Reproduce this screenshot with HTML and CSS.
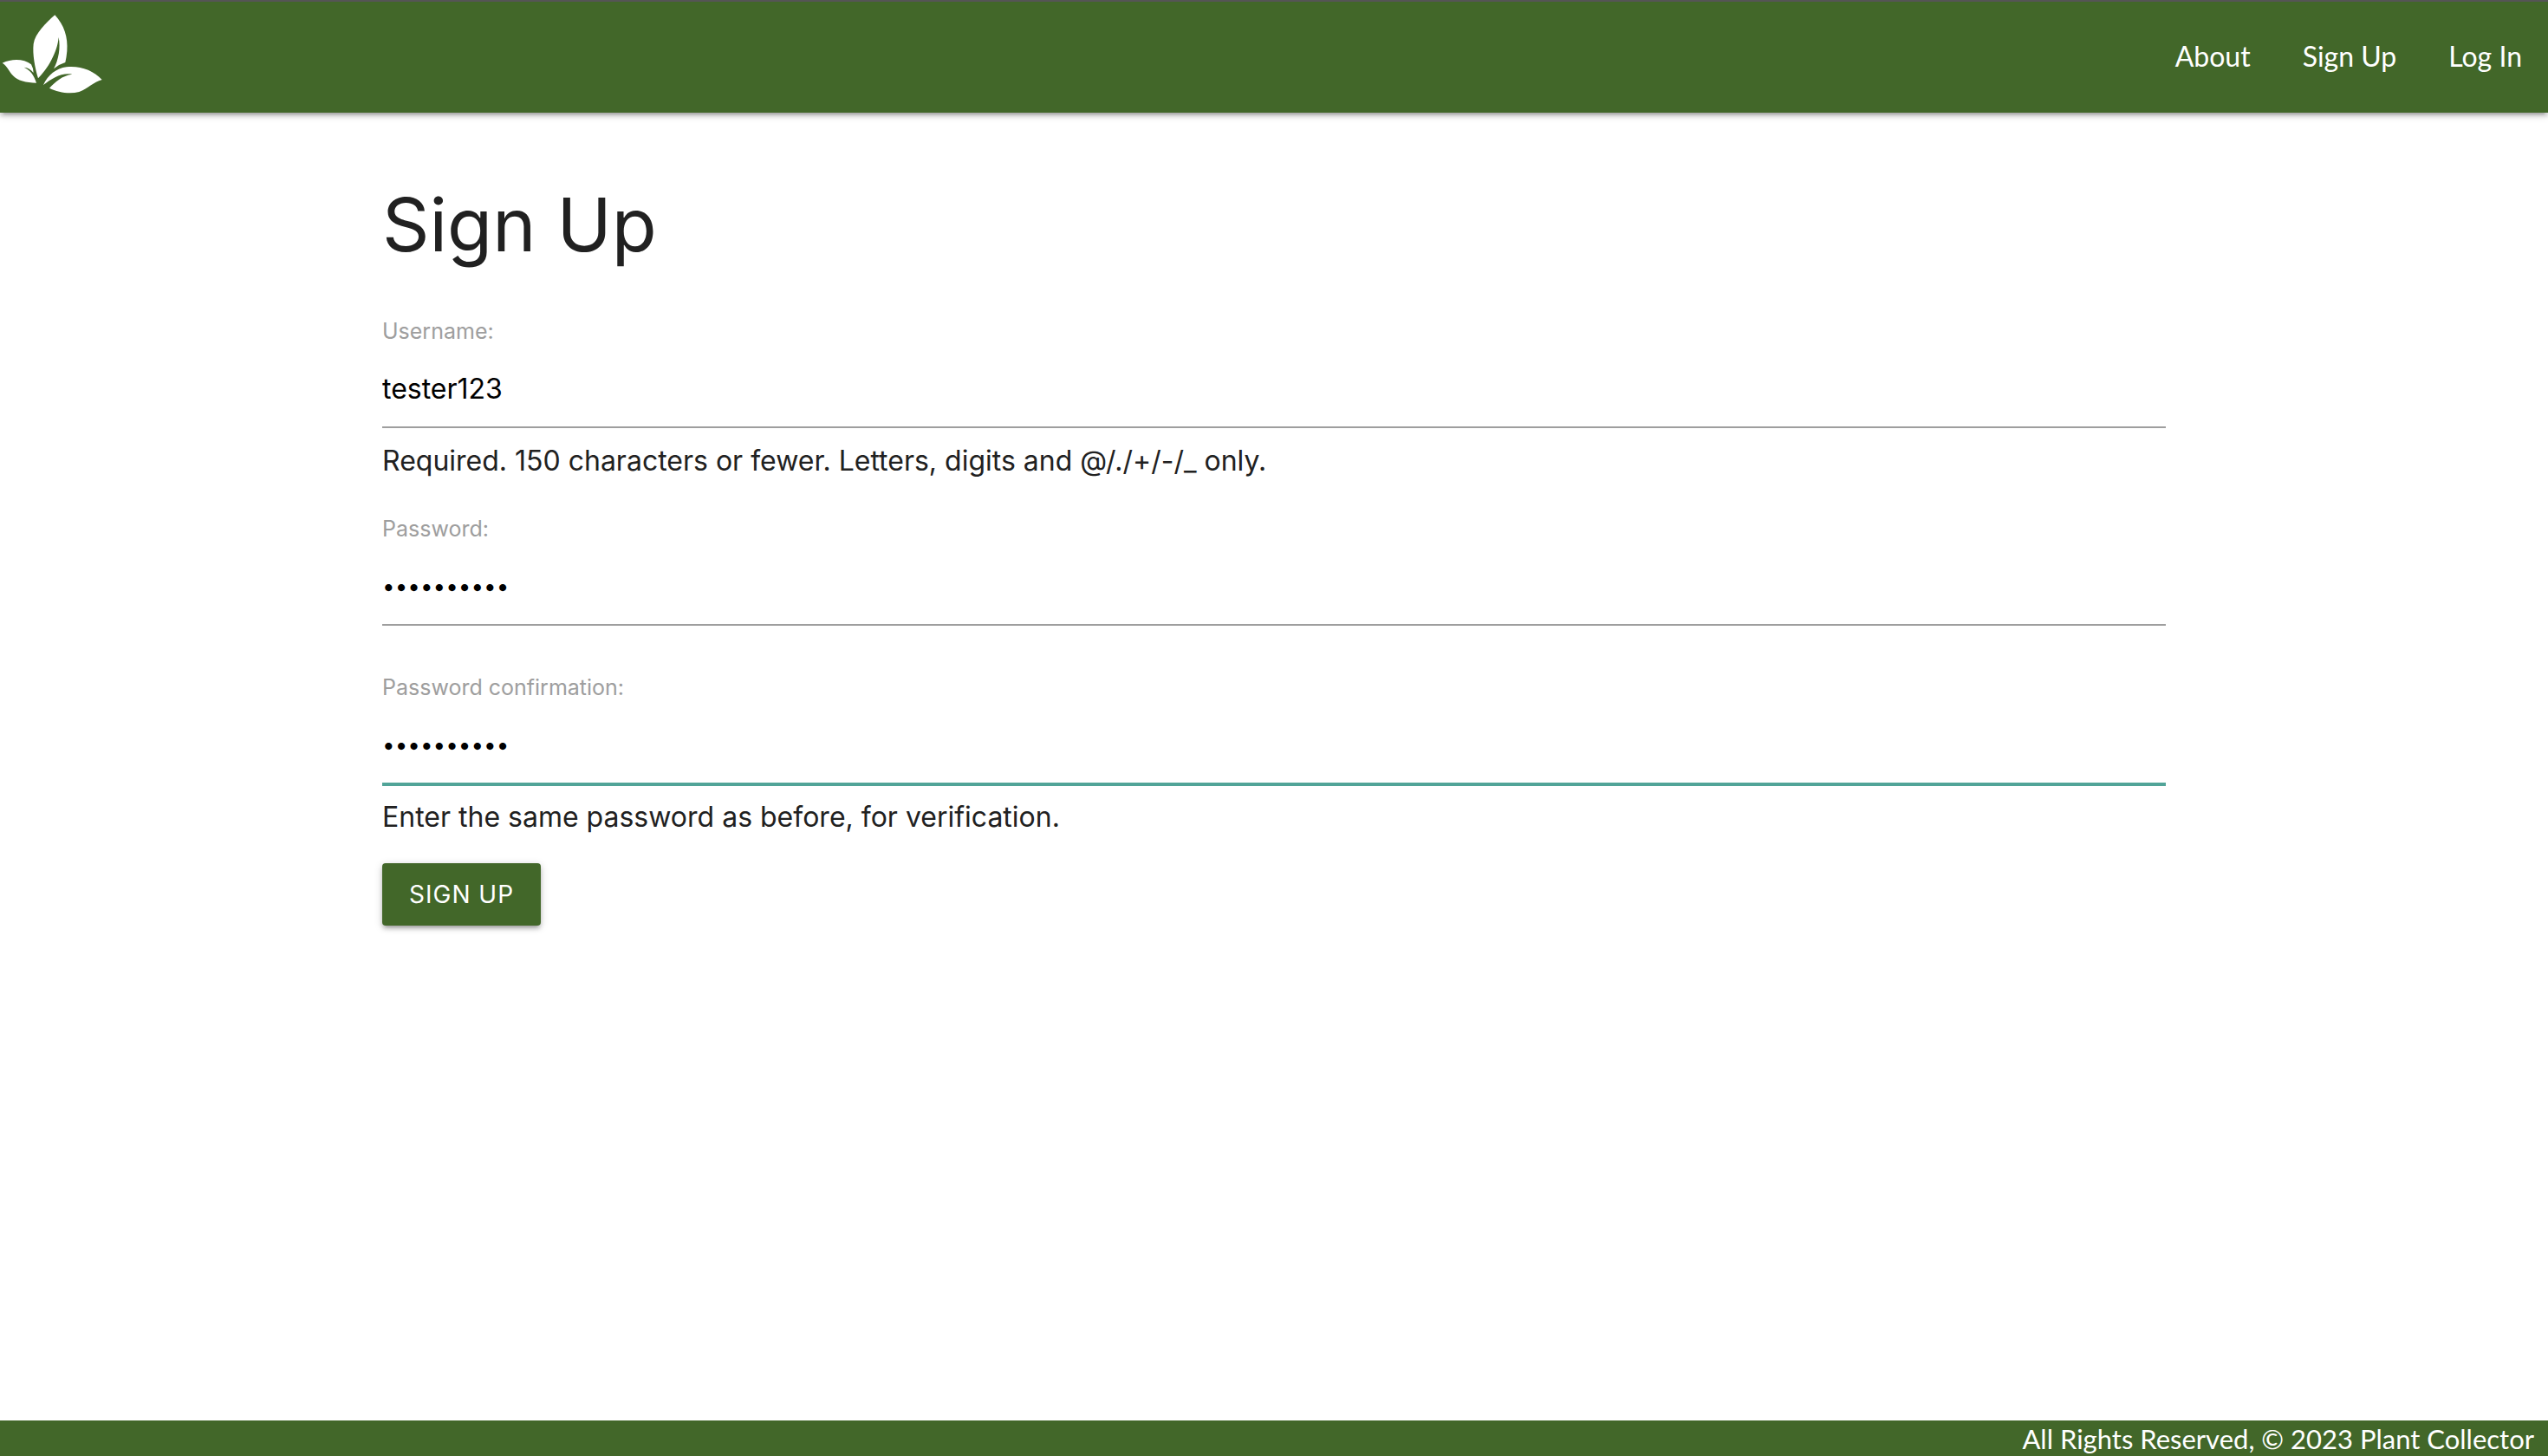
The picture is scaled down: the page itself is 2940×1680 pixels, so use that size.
FILE: index.html
```html
<!DOCTYPE html>
<html lang="en">
<head>
  <meta charset="utf-8">
  <title>Plant Collector</title>
  <link rel="stylesheet" href="styles.css">
</head>
<body>
  <header class="navbar">
    <a class="brand" href="#" aria-label="Plant Collector home">
      <svg class="brand-logo" viewBox="0 6 360 384" aria-hidden="true">
        <path d="M190 52C222 87 236 129 232 177Q230 200 226 216Q205 222 186 238C203 207 210 164 203 129C199 181 164 240 132 271C121 235 112 187 116 152C122 116 158 80 190 52Z"/>
        <path d="M8 218C43 202 84 204 108 223Q115 235 116 252Q102 234 83 233C103 241 118 259 126 287C90 287 61 279 45 262C29 245 27 230 8 218Z"/>
        <path d="M150 294C166 260 195 236 230 232C278 227 321 243 353 276C322 284 309 305 274 318C241 326 200 320 171 305C191 283 215 262 250 257C213 250 179 272 150 294Z"/>
      </svg>
    </a>
    <nav class="nav-links">
      <a href="#">About</a>
      <a href="#">Sign Up</a>
      <a href="#">Log In</a>
    </nav>
  </header>

  <main class="container">
    <h1 class="title">Sign Up</h1>
    <form class="form">
      <div class="field">
        <label for="username">Username:</label>
        <input id="username" type="text" value="tester123">
        <p class="help">Required. 150 characters or fewer. Letters, digits and @/./+/-/_ only.</p>
      </div>
      <div class="field field-plain">
        <label for="password1">Password:</label>
        <input id="password1" type="password" value="plants2023">
      </div>
      <div class="field field-last">
        <label for="password2">Password confirmation:</label>
        <input id="password2" class="active" type="password" value="plants2023">
        <p class="help">Enter the same password as before, for verification.</p>
      </div>
      <button class="btn" type="button">Sign Up</button>
    </form>
  </main>

  <footer class="footer">All Rights Reserved, © 2023 Plant Collector</footer>
</body>
</html>
```
FILE: styles.css
```css
* {
  box-sizing: border-box;
}

body {
  margin: 0;
  min-height: 100vh;
  display: flex;
  flex-direction: column;
  background: #fff;
  color: #212121;
  font-family: Inter, "Liberation Sans", sans-serif;
  font-size: 32px;
  line-height: 48px;
}

.navbar {
  display: flex;
  justify-content: space-between;
  align-items: center;
  border-top: 2px solid #555;
  background: #426729;
  box-shadow: 0 4px 4px 0 rgba(0, 0, 0, .14), 0 6px 2px -4px rgba(0, 0, 0, .12), 0 2px 10px 0 rgba(0, 0, 0, .2);
}

.brand-logo {
  display: block;
  width: 120px;
  height: 128px;
  fill: #fff;
}

.nav-links {
  display: flex;
  gap: 60px;
  padding: 0 30px 2px 0;
}

.nav-links a {
  color: #fff;
  font-family: Lato, sans-serif;
  font-size: 32px;
  text-decoration: none;
}

.container {
  flex: 1;
  width: 70%;
  margin: 0 auto;
  padding-top: 84px;
}

.title {
  margin: 0 0 54px;
  font-size: 85px;
  font-weight: 400;
  line-height: 92px;
}

.field {
  display: flex;
  flex-direction: column;
  margin-bottom: 32px;
}

.field-plain {
  margin-bottom: 49px;
}

.field-last {
  margin-bottom: 29px;
}

.field label {
  color: #9e9e9e;
  font-size: 25px;
  line-height: 44px;
}

.field input {
  width: 100%;
  height: 90px;
  padding: 0;
  border: 0;
  border-bottom: 2px solid #9e9e9e;
  outline: 0;
  background: transparent;
  color: #000;
  font: inherit;
}

.field input[type="password"] {
  font-size: 26px;
}

.field input.active {
  border-color: #51a498;
  box-shadow: 0 2px 0 0 #51a498;
}

.help {
  margin: 14px 0 0;
}

.btn {
  height: 72px;
  padding: 0 31px;
  border: 0;
  border-radius: 4px;
  background: #426729;
  box-shadow: 0 4px 4px 0 rgba(0, 0, 0, .14), 0 6px 2px -4px rgba(0, 0, 0, .12), 0 2px 10px 0 rgba(0, 0, 0, .2);
  color: #fff;
  font: inherit;
  font-size: 28px;
  letter-spacing: 1px;
  text-transform: uppercase;
}

.footer {
  padding: 1px 16px 0;
  background: #426729;
  color: #fff;
  font-family: Lato, sans-serif;
  font-size: 31px;
  line-height: 40px;
  text-align: right;
}
```
